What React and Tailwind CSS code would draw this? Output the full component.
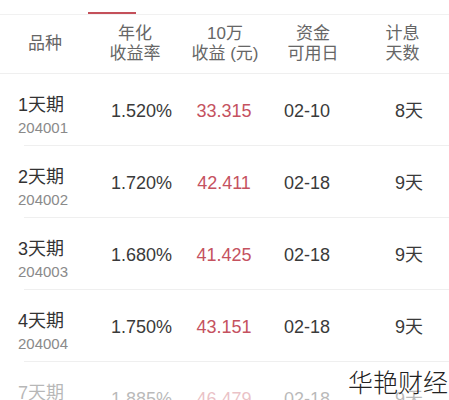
import React from "react";

const rows = [
  { name: "1天期", code: "204001", rate: "1.520%", gain: "33.315", date: "02-10", days: "8天" },
  { name: "2天期", code: "204002", rate: "1.720%", gain: "42.411", date: "02-18", days: "9天" },
  { name: "3天期", code: "204003", rate: "1.680%", gain: "41.425", date: "02-18", days: "9天" },
  { name: "4天期", code: "204004", rate: "1.750%", gain: "43.151", date: "02-18", days: "9天" },
  { name: "7天期", code: "204007", rate: "1.885%", gain: "46.479", date: "02-18", days: "9天" },
];

const font = { fontFamily: '"Liberation Sans", "Noto Sans CJK SC", sans-serif' };

function Row({ r, faded }) {
  return (
    <div className={"ml-[24px] grid h-[72px] grid-cols-[76px_83px_82px_84px_1fr] items-center border-b border-[#efefef] " + (faded ? "opacity-35" : "")}>
      <div className="-ml-[6px] mt-[10px] flex flex-col">
        <span className="text-[18px] leading-[26px] text-[#333]">{r.name}</span>
        <span className="text-[15px] leading-[20px] text-[#8a8a8a]">{r.code}</span>
      </div>
      <div className="mt-[4px] text-center text-[18px] text-[#3a3a3a]">{r.rate}</div>
      <div className="mt-[4px] text-center text-[18px] text-[#c5525f]">{r.gain}</div>
      <div className="mt-[4px] text-center text-[18px] text-[#3a3a3a]">{r.date}</div>
      <div className="mt-[4px] pr-[26px] text-right text-[18px] text-[#3a3a3a]">{r.days}</div>
    </div>
  );
}

export default function App() {
  return (
    <div className="relative h-[400px] w-[449px] overflow-hidden bg-white" style={font}>
      <div className="relative h-[15px] border-b border-[#f1f1f1]">
        <div className="absolute left-[88px] top-[12px] h-[2px] w-[48px] bg-[#c4505a]" />
      </div>
      <div className="grid h-[59px] grid-cols-[90px_90px_90px_86px_1fr] items-center border-b border-[#efefef] text-center text-[17px] leading-[20px] text-[#666]">
        <div>品种</div>
        <div>年化<br />收益率</div>
        <div>10万<br />收益 (元)</div>
        <div>资金<br />可用日</div>
        <div>计息<br />天数</div>
      </div>
      {rows.map((r, i) => (
        <Row key={r.code} r={r} faded={i === 4} />
      ))}
      <div className="absolute right-[1px] top-[367px] text-[25px] font-light leading-[28px] text-[#222]" style={{ fontFamily: '"Noto Sans CJK SC", sans-serif' }}>
        华艳财经
      </div>
    </div>
  );
}
